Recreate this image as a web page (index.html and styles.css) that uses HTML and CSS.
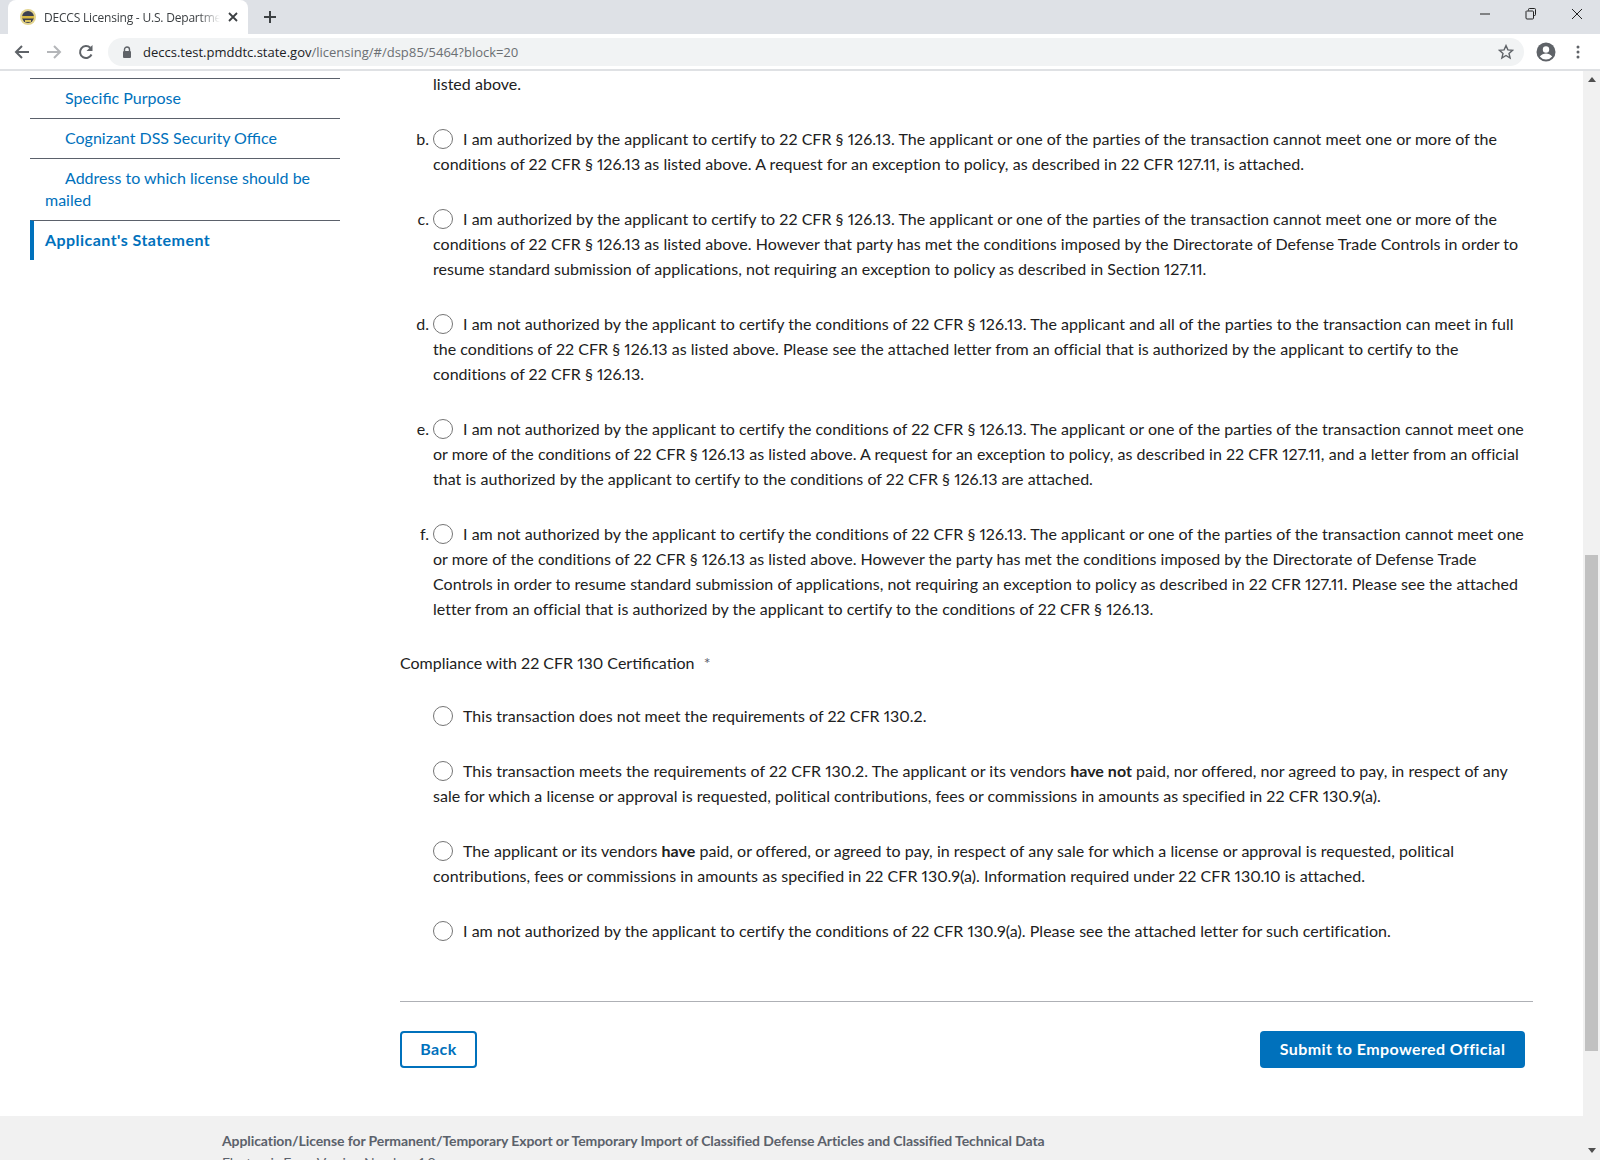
FILE: index.html
```html
<!DOCTYPE html>
<html>
<head>
    <title>DECCS Licensing - U.S. Department of State</title>
    <meta charset="utf-8">
    <link rel="stylesheet" href="styles.css">
</head>
<body>
    <div class="tabstrip">
        <div class="tab">
            <svg class="favicon" width="16" height="16" viewBox="0 0 16 16"><circle cx="8" cy="8" r="8" fill="#e3d48f"/><circle cx="8" cy="8" r="6" fill="#3d4150"/><path d="M2 7h12v2.500H2z" fill="#d9b93f"/><path d="M5 11h6v2H5z" fill="#d9c25e"/></svg>
            <span class="tab-title">DECCS Licensing - U.S. Departme</span>
            <svg class="tab-close" width="10" height="10" viewBox="0 0 10 10"><path d="M1 1l8 8M9 1l-8 8" stroke="#3c4043" stroke-width="1.800"/></svg>
        </div>
        <svg class="newtab" width="14" height="14" viewBox="0 0 14 14"><path d="M7 1v12M1 7h12" stroke="#3c4043" stroke-width="2"/></svg>
        <div class="window-btns">
            <svg width="12" height="12" viewBox="0 0 12 12"><path d="M1 6h10" stroke="#222" stroke-width="1"/></svg>
            <svg width="12" height="12" viewBox="0 0 12 12"><path d="M3.500 2.500V1.500a1 1 0 0 1 1-1h5a1 1 0 0 1 1 1v5a1 1 0 0 1-1 1h-1M1.500 3h6a1 1 0 0 1 1 1v6a1 1 0 0 1-1 1h-5.500a1 1 0 0 1-1-1V3.500z" fill="none" stroke="#222"/></svg>
            <svg width="12" height="12" viewBox="0 0 12 12"><path d="M1 1l10 10M11 1L1 11" stroke="#222" stroke-width="1"/></svg>
        </div>
    </div>

    <div class="toolbar">
        <svg class="nav-icon" width="16" height="16" viewBox="0 0 16 16"><path d="M15 8H2M8 2L2 8l6 6" fill="none" stroke="#5f6368" stroke-width="2"/></svg>
        <svg class="nav-icon" width="16" height="16" viewBox="0 0 16 16"><path d="M1 8h13M8 2l6 6-6 6" fill="none" stroke="#b4b6b9" stroke-width="2"/></svg>
        <svg class="nav-icon" width="16" height="16" viewBox="0 0 16 16"><path d="M13.500 10.500A6 6 0 1 1 12.300 3.800" fill="none" stroke="#5f6368" stroke-width="2"/><path d="M14.500 1v6h-6z" fill="#5f6368"/></svg>
        <div class="omnibox">
            <svg width="10" height="12" viewBox="0 0 10 12"><path d="M2.500 5V3.500a2.500 2.500 0 0 1 5 0V5" fill="none" stroke="#5f6368" stroke-width="1.400"/><rect x="1" y="5" width="8" height="7" rx="1" fill="#5f6368"/></svg>
            <span class="url"><span class="url-host">deccs.test.pmddtc.state.gov</span>/licensing/#/dsp85/5464?block=20</span>
            <svg class="star" width="16" height="16" viewBox="0 0 16 16"><path d="M8 1.600l1.900 4.300 4.700.4-3.600 3.100 1.100 4.600L8 11.500l-4.100 2.500L5 9.400 1.400 6.300l4.700-.4z" fill="none" stroke="#5f6368" stroke-width="1.400"/></svg>
        </div>
        <svg class="avatar" width="20" height="20" viewBox="0 0 20 20"><circle cx="10" cy="10" r="9.500" fill="#5f6368"/><circle cx="10" cy="7.500" r="3.200" fill="#fff"/><path d="M3.800 14.600c1.500-2.300 4-3.100 6.200-3.100s4.700.8 6.200 3.100A7.800 7.800 0 0 1 10 17.500a7.800 7.800 0 0 1-6.200-2.900z" fill="#fff"/></svg>
        <svg class="menu-dots" width="4" height="14" viewBox="0 0 4 14"><circle cx="2" cy="2" r="1.500" fill="#5f6368"/><circle cx="2" cy="7" r="1.500" fill="#5f6368"/><circle cx="2" cy="12" r="1.500" fill="#5f6368"/></svg>
    </div>

    <div class="viewport">
        <div class="page">
            <div class="layout">
                <ul class="sidenav">
                    <li><a href="#">Specific Purpose</a></li>
                    <li><a href="#">Cognizant DSS Security Office</a></li>
                    <li><a href="#">Address to which license should be mailed</a></li>
                    <li class="current"><a href="#">Applicant's Statement</a></li>
                </ul>

                <div class="main">
                    <p class="option first">listed above.</p>
                    <p class="option"><span class="marker">b.</span><span class="radio"></span>I am authorized by the applicant to certify to 22 CFR § 126.13. The applicant or one of the parties of the transaction cannot meet one or more of the<br>conditions of 22 CFR § 126.13 as listed above. A request for an exception to policy, as described in 22 CFR 127.11, is attached.</p>
                    <p class="option"><span class="marker">c.</span><span class="radio"></span>I am authorized by the applicant to certify to 22 CFR § 126.13. The applicant or one of the parties of the transaction cannot meet one or more of the<br>conditions of 22 CFR § 126.13 as listed above. However that party has met the conditions imposed by the Directorate of Defense Trade Controls in order to<br>resume standard submission of applications, not requiring an exception to policy as described in Section 127.11.</p>
                    <p class="option"><span class="marker">d.</span><span class="radio"></span>I am not authorized by the applicant to certify the conditions of 22 CFR § 126.13. The applicant and all of the parties to the transaction can meet in full<br>the conditions of 22 CFR § 126.13 as listed above. Please see the attached letter from an official that is authorized by the applicant to certify to the<br>conditions of 22 CFR § 126.13.</p>
                    <p class="option"><span class="marker">e.</span><span class="radio"></span>I am not authorized by the applicant to certify the conditions of 22 CFR § 126.13. The applicant or one of the parties of the transaction cannot meet one<br>or more of the conditions of 22 CFR § 126.13 as listed above. A request for an exception to policy, as described in 22 CFR 127.11, and a letter from an official<br>that is authorized by the applicant to certify to the conditions of 22 CFR § 126.13 are attached.</p>
                    <p class="option"><span class="marker">f.</span><span class="radio"></span>I am not authorized by the applicant to certify the conditions of 22 CFR § 126.13. The applicant or one of the parties of the transaction cannot meet one<br>or more of the conditions of 22 CFR § 126.13 as listed above. However the party has met the conditions imposed by the Directorate of Defense Trade<br>Controls in order to resume standard submission of applications, not requiring an exception to policy as described in 22 CFR 127.11. Please see the attached<br>letter from an official that is authorized by the applicant to certify to the conditions of 22 CFR § 126.13.</p>

                    <div class="field-label">Compliance with 22 CFR 130 Certification <span class="req">*</span></div>

                    <p class="option tight"><span class="radio"></span>This transaction does not meet the requirements of 22 CFR 130.2.</p>
                    <p class="option"><span class="radio"></span>This transaction meets the requirements of 22 CFR 130.2. The applicant or its vendors <strong>have not</strong> paid, nor offered, nor agreed to pay, in respect of any<br>sale for which a license or approval is requested, political contributions, fees or commissions in amounts as specified in 22 CFR 130.9(a).</p>
                    <p class="option"><span class="radio"></span>The applicant or its vendors <strong>have</strong> paid, or offered, or agreed to pay, in respect of any sale for which a license or approval is requested, political<br>contributions, fees or commissions in amounts as specified in 22 CFR 130.9(a). Information required under 22 CFR 130.10 is attached.</p>
                    <p class="option"><span class="radio"></span>I am not authorized by the applicant to certify the conditions of 22 CFR 130.9(a). Please see the attached letter for such certification.</p>

                    <hr class="divider">

                    <div class="actions">
                        <button class="btn btn-outline">Back</button>
                        <button class="btn btn-primary">Submit to Empowered Official</button>
                    </div>
                </div>
            </div>

            <div class="footer">
                <div class="footer-title">Application/License for Permanent/Temporary Export or Temporary Import of Classified Defense Articles and Classified Technical Data</div>
                <div class="footer-version">Electronic Form Version Number: 1.0</div>
            </div>
        </div>

        <div class="scrollbar">
            <div class="arrow-up"></div>
            <div class="track"><div class="thumb"></div></div>
            <div class="arrow-down"></div>
        </div>
    </div>
</body>
</html>
```

FILE: styles.css
```css
html, body { height: 100%; }
body { margin: 0; height: 1160px; overflow: hidden; font-family: "Lato", "Liberation Sans", sans-serif; font-size: 16px; font-variant-numeric: proportional-nums; color: #212121; background: #fff; display: flex; flex-direction: column; }

/* browser chrome */
.tabstrip { height: 34px; background: #dee1e6; display: flex; align-items: flex-end; flex: none; }
.tab { width: 240px; height: 34px; margin-left: 8px; background: #fff; border-radius: 8px 8px 0 0; display: flex; align-items: center; padding: 0 12px; box-sizing: border-box; }
.favicon { flex: none; }
.tab-title { font-family: "Open Sans", sans-serif; font-size: 12px; letter-spacing: -0.2px; color: #3c4043; margin-left: 8px; width: 176px; white-space: nowrap; -webkit-mask-image: linear-gradient(to right, #000 88%, transparent); mask-image: linear-gradient(to right, #000 88%, transparent); }
.tab-close { flex: none; margin-left: 8px; }
.newtab { margin: 0 0 10px 15px; }
.window-btns { margin-left: auto; height: 34px; width: 121px; display: flex; align-items: center; justify-content: space-between; padding: 0 17px 6px 0; box-sizing: border-box; }

.toolbar { height: 35px; background: #fff; border-bottom: 2px solid #dfe1e4; display: flex; align-items: center; flex: none; padding-left: 14px; }
.nav-icon { margin-right: 16px; flex: none; }
.omnibox { width: 1416px; height: 28px; margin-left: -2px; background: #f1f3f4; border-radius: 14px; display: flex; align-items: center; padding: 0 10px 0 14px; box-sizing: border-box; }
.url { font-family: "Open Sans", sans-serif; font-size: 13px; color: #6b6f73; margin-left: 11px; flex: 1; }
.url-host { color: #202124; }
.avatar { margin-left: 12px; flex: none; }
.menu-dots { margin-left: 20px; flex: none; }

/* page */
.viewport { flex: 1; min-height: 0; display: flex; }
.page { flex: 1; min-width: 0; overflow: hidden; }
.scrollbar { width: 17px; background: #f1f1f1; display: flex; flex-direction: column; align-items: center; flex: none; }
.arrow-up { margin: 6px 0 0; border: 4px solid transparent; border-top: 0; border-bottom: 5px solid #505050; }
.arrow-down { margin: 0 0 7px; border: 4px solid transparent; border-bottom: 0; border-top: 5px solid #505050; }
.track { flex: 1; width: 100%; padding-top: 473px; box-sizing: border-box; }
.thumb { width: 13px; height: 496px; margin: 0 auto; background: #c1c1c1; }

.layout { display: flex; align-items: flex-start; }
.sidenav { list-style: none; margin: 7px 0 0 30px; padding: 0; width: 310px; flex: none; font-size: 16px; line-height: 22px; }
.sidenav li { border-top: 1px solid #5b616b; padding: 8px 15px 9px; }
.sidenav li:not(.current) a { display: block; text-indent: 20px; }
.sidenav a { color: #0071bc; text-decoration: none; }
.sidenav .current { border-left: 4px solid #0071bc; padding-left: 11px; }
.sidenav .current a { font-weight: 700; letter-spacing: 0.45px; }

.main { width: 1133px; margin-left: 60px; }
.option { margin: 30px 0 0; padding-left: 33px; line-height: 25px; letter-spacing: 0.03px; white-space: nowrap; }
.option.first { margin-top: 0; }
.option.tight { margin-top: 28px; }
.marker { display: inline-block; width: 30px; margin-left: -33px; margin-right: 3px; text-align: right; padding-right: 1px; box-sizing: border-box; }
.radio { display: inline-block; width: 20px; height: 20px; box-sizing: border-box; border: 1.500px solid #757575; border-radius: 50%; background: #fff; vertical-align: -4px; margin-right: 10px; }
.field-label { margin-top: 29px; line-height: 25px; }
.req { color: #5b616b; margin-left: 5px; }

.divider { margin: 58px 0 0; border: 0; border-top: 1px solid #aeb0b5; }
.actions { display: flex; justify-content: space-between; margin: 29px 8px 48px 0; }
.btn { height: 37px; font-family: inherit; font-size: 16px; font-weight: 700; letter-spacing: 0.4px; border-radius: 4px; box-sizing: border-box; padding: 0 0 2px; }
.btn-outline { width: 77px; background: #fff; color: #0071bc; border: 2px solid #0071bc; }
.btn-primary { width: 265px; background: #0071bc; color: #fff; border: 0; }

.footer { background: #f1f1f1; padding: 15px 0 0 222px; height: 60px; box-sizing: border-box; font-size: 14px; letter-spacing: -0.09px; line-height: 20px; color: #5b616b; }
.footer-title { font-weight: 700; }
.footer-version { margin-top: 2px; letter-spacing: -0.3px; }
```
